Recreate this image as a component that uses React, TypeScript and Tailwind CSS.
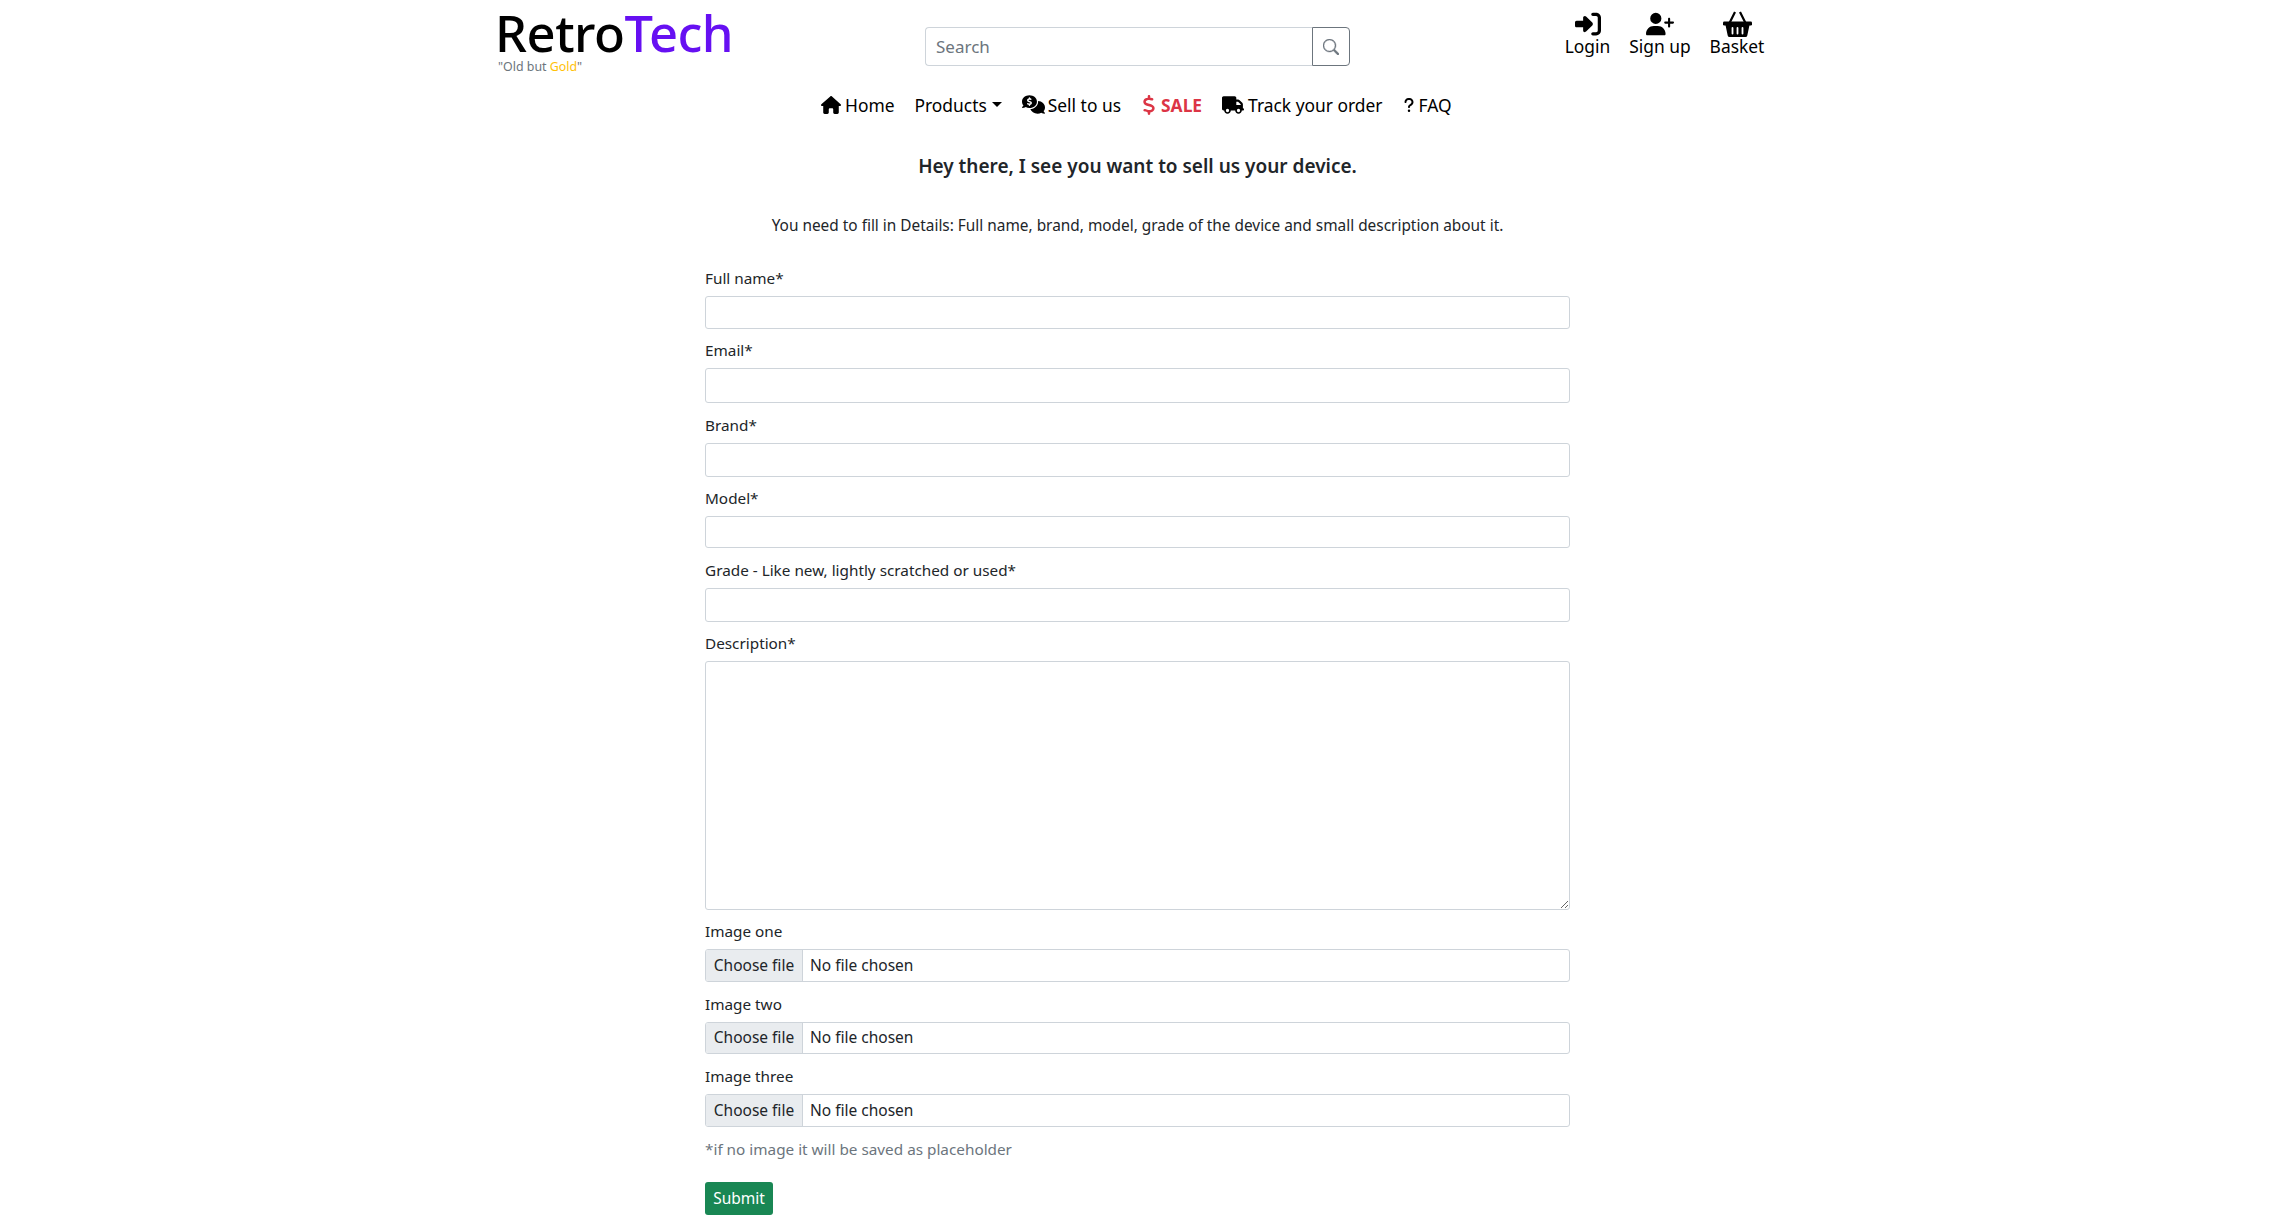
import React from 'react';
import { FaCommentsDollar, FaDollarSign, FaHouse, FaQuestion, FaRightToBracket, FaTruck, FaUserPlus } from 'react-icons/fa6';

const fieldClass = 'block w-full border border-[#ced4da] rounded-[3px] bg-white outline-none';
const labelClass = 'block h-[24px] mb-[5px] leading-[22px] text-[15.3px]';

const Field = ({ label, mt, height }: { label: string; mt: string; height: string }) => (
  <div className={mt}>
    <label className={labelClass}>{label}</label>
    <input type="text" className={`${fieldClass} ${height}`} />
  </div>
);

// native file input says "Choose File", the picture has a lower case f
const FileField = ({ label, mt, height }: { label: string; mt: string; height: string }) => (
  <div className={mt}>
    <label className={labelClass}>{label}</label>
    <div className={`${fieldClass} ${height} flex items-center overflow-hidden text-[15.5px]`}>
      <span className="h-full w-[97px] flex items-center justify-center bg-[#e9ecef] border-r border-[#ced4da]">Choose file</span>
      <span className="ml-[7px]">No file chosen</span>
    </div>
  </div>
);

const HeaderLink = ({ icon, label, width }: { icon: React.ReactNode; label: string; width: string }) => (
  <a className={`${width} flex flex-col items-center text-black text-[17.4px] leading-[21px]`}>
    <span className="h-[24px] flex items-center">{icon}</span>
    {label}
  </a>
);

const BasketIcon = () => (
  <svg width="29" height="26" viewBox="0 0 29 26" fill="currentColor">
    <path d="M6.5 12 12 1M22.5 12 17 1" fill="none" stroke="currentColor" strokeWidth="2.2" />
    <rect x="0" y="10.5" width="29" height="4" rx="1.2" />
    <path d="M2.5 14h24l-2.2 10.4a2 2 0 0 1-2 1.6H6.7a2 2 0 0 1-2-1.6z" />
    <path d="M9.5 17v5.5M14.5 17v5.5M19.5 17v5.5" fill="none" stroke="#fff" strokeWidth="1.8" strokeLinecap="round" />
  </svg>
);

export default function App() {
  return (
    <div className="min-h-[1222px] bg-white text-[#212529]" style={{ fontFamily: '"Noto Sans", sans-serif' }}>
      <header className="mx-auto w-[1278px] h-[82px] flex">
        <div className="w-[428px] pt-[7px]">
          <div className="-ml-[2px] text-[50.7px] leading-[52px] font-medium text-black tracking-[-0.5px]">
            Retro<span className="text-[#6610f2]">Tech</span>
          </div>
          <div className="ml-[1px] text-[12.4px] leading-[14px] mt-[1px] text-[#6c757d]">
            "Old but <span className="text-[#ffc107]">Gold</span>"
          </div>
        </div>
        <div className="w-[425px] h-[39px] mt-[27px] flex">
          <input
            placeholder="Search"
            className="flex-1 min-w-0 border border-[#ced4da] border-r-0 rounded-l-[4px] px-[10px] text-[17px] outline-none placeholder:text-[#6c757d]"
          />
          <button className="w-[38px] border border-[#6c757d] rounded-r-[4px] flex items-center justify-center text-[#6c757d]">
            <svg width="16" height="16" viewBox="0 0 16 16" fill="currentColor" stroke="currentColor" strokeWidth="0.4">
              <path d="M11.742 10.344a6.5 6.5 0 1 0-1.397 1.398h-.001c.03.04.062.078.098.115l3.85 3.85a1 1 0 0 0 1.415-1.414l-3.85-3.85a1.007 1.007 0 0 0-.115-.1zM12 6.5a5.5 5.5 0 1 1-11 0 5.5 5.5 0 0 1 11 0z" />
            </svg>
          </button>
        </div>
        <div className="ml-auto -mr-[1px] pt-[12px] flex">
          <HeaderLink icon={<FaRightToBracket className="text-[26px]" />} label="Login" width="w-[69px]" />
          <HeaderLink icon={<FaUserPlus className="text-[28px]" />} label="Sign up" width="w-[76px]" />
          <HeaderLink icon={<BasketIcon />} label="Basket" width="w-[78px]" />
        </div>
      </header>

      <nav className="ml-[821px] h-[46px] flex items-center gap-[20px] text-[17.4px] text-black">
        <a className="flex items-center gap-[4px]"><FaHouse className="text-[20px]" />Home</a>
        <a className="flex items-center gap-[5px]">
          Products
          <span className="border-x-[5px] border-x-transparent border-t-[5.5px] border-t-black" />
        </a>
        <a className="flex items-center gap-[3px]"><FaCommentsDollar className="text-[23px]" />Sell to us</a>
        <a className="-ml-[2px] flex items-center gap-[2px] font-bold text-[#dc3545]"><FaDollarSign className="text-[20px]" />SALE</a>
        <a className="flex items-center gap-[4px]"><FaTruck className="text-[22px]" />Track your order</a>
        <a className="-ml-[2px] flex items-center gap-[2px]"><FaQuestion className="text-[16px]" />FAQ</a>
      </nav>

      <main className="ml-[705px] w-[865px] pb-[7px]">
        <h2 className="mt-[23px] text-center text-[19px] leading-[30px] font-semibold">Hey there, I see you want to sell us your device.</h2>
        <p className="mt-[30px] text-center text-[15.4px] leading-[30px]">
          You need to fill in Details: Full name, brand, model, grade of the device and small description about it.
        </p>
        <form>
          <Field label="Full name*" mt="mt-[26px]" height="h-[33px]" />
          <Field label="Email*" mt="mt-[10px]" height="h-[35px]" />
          <Field label="Brand*" mt="mt-[11px]" height="h-[34px]" />
          <Field label="Model*" mt="mt-[10px]" height="h-[32px]" />
          <Field label="Grade - Like new, lightly scratched or used*" mt="mt-[11px]" height="h-[34px]" />
          <div className="mt-[10px]">
            <label className={labelClass}>Description*</label>
            <textarea className={`${fieldClass} h-[249px]`} />
          </div>
          <FileField label="Image one" mt="mt-[10px]" height="h-[33px]" />
          <FileField label="Image two" mt="mt-[11px]" height="h-[32px]" />
          <FileField label="Image three" mt="mt-[11px]" height="h-[33px]" />
          <p className="mt-[10px] h-[25px] text-[15.3px] leading-[24px] text-[#6c757d]">*if no image it will be saved as placeholder</p>
          <button type="button" className="block mt-[20px] h-[33px] w-[68px] rounded-[3px] bg-[#198754] text-white text-[15.5px]">Submit</button>
        </form>
      </main>
    </div>
  );
}
